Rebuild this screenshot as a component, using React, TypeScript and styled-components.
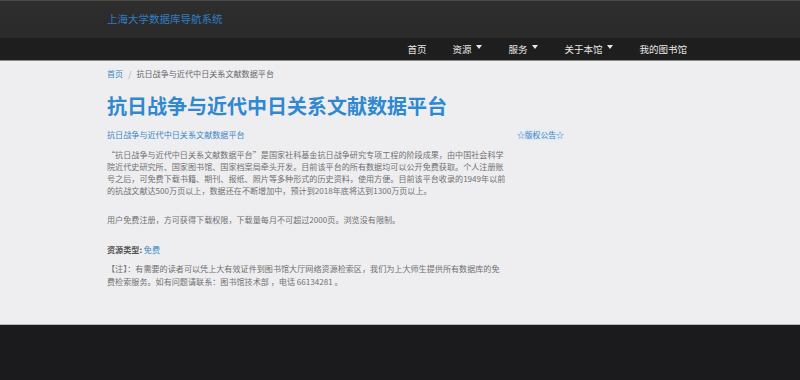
import styled, { createGlobalStyle } from "styled-components"

const GlobalStyle = createGlobalStyle`
    html, body {
        margin: 0;
        padding: 0;
        background: #1b1a1c;
        font-family: "Noto Sans CJK SC", "Noto Sans", sans-serif;
    }
`

const navItems = [
    { label: "首页", caret: false },
    { label: "资源", caret: true },
    { label: "服务", caret: true },
    { label: "关于本馆", caret: true },
    { label: "我的图书馆", caret: false },
]

// lines broken as in the original page
const introLines = [
    "“抗日战争与近代中日关系文献数据平台”是国家社科基金抗日战争研究专项工程的阶段成果，由中国社会科学",
    "院近代史研究所、国家图书馆、国家档案局牵头开发。目前该平台的所有数据均可以公开免费获取。个人注册账",
    "号之后，可免费下载书籍、期刊、报纸、照片等多种形式的历史资料，使用方便。目前该平台收录的1949年以前",
    "的抗战文献达500万页以上，数据还在不断增加中，预计到2018年底将达到1300万页以上。",
]

const noteLines = [
    "【注】：有需要的读者可以凭上大有效证件到图书馆大厅网络资源检索区，我们为上大师生提供所有数据库的免",
    "费检索服务。如有问题请联系：图书馆技术部 ，电话 66134281 。",
]

export default function App() {
    return (
        <>
            <GlobalStyle />
            <TopBar>
                <Container>
                    <SiteTitle>上海大学数据库导航系统</SiteTitle>
                </Container>
            </TopBar>
            <NavBar>
                <NavInner>
                    {navItems.map((item) => (
                        <NavItem key={item.label}>
                            {item.label}
                            {item.caret ? <Caret /> : null}
                        </NavItem>
                    ))}
                </NavInner>
            </NavBar>
            <Content>
                <Container>
                    <Breadcrumb>
                        <Crumb>首页</Crumb>
                        <Slash>/</Slash>
                        抗日战争与近代中日关系文献数据平台
                    </Breadcrumb>
                    <Heading>抗日战争与近代中日关系文献数据平台</Heading>
                    <Row>
                        <Main>
                            <SubTitle>抗日战争与近代中日关系文献数据平台</SubTitle>
                            <Para>
                                {introLines.map((line) => (
                                    <Line key={line}>{line}</Line>
                                ))}
                            </Para>
                            <Para gap={17}>
                                用户免费注册，方可获得下载权限，下载量每月不可超过2000页。浏览没有限制。
                            </Para>
                            <TypeLine>
                                <TypeLabel>资源类型:</TypeLabel> <Crumb>免费</Crumb>
                            </TypeLine>
                            <Note>
                                {noteLines.map((line) => (
                                    <Line key={line}>{line}</Line>
                                ))}
                            </Note>
                        </Main>
                        <Side>☆版权公告☆</Side>
                    </Row>
                </Container>
            </Content>
            <Footer />
        </>
    )
}

const Container = styled.div`
    width: 586px;
    margin: 0 auto;
`

const TopBar = styled.header`
    height: 38px;
    background: linear-gradient(#2e2e2e, #2a2a2a);
    border-top: 1px solid #4a4a4a;
    box-sizing: border-box;
    display: flex;
    align-items: center;
`

const SiteTitle = styled.div`
    color: #2f7dc2;
    font-size: 10.5px;
    line-height: 14px;
    margin-top: -2px;
`

const NavBar = styled.nav`
    height: 22px;
    background: #1e1e1e;
    border-bottom: 1px solid #8a8a8a;
`

const NavInner = styled(Container)`
    display: flex;
    justify-content: flex-end;
    height: 100%;
    padding-right: 6px;
    box-sizing: border-box;
`

const NavItem = styled.div`
    display: flex;
    align-items: center;
    padding: 0 13px;
    color: #e8e8e8;
    font-size: 9.5px;
    &:last-child {
        padding-right: 0;
    }
`

const Caret = styled.span`
    width: 0;
    height: 0;
    margin-left: 5px;
    margin-top: -5px;
    border-left: 3px solid transparent;
    border-right: 3px solid transparent;
    border-top: 4px solid #e8e8e8;
`

const Content = styled.main`
    background: #eeeef0;
    height: 263px;
    padding-top: 6px;
    box-sizing: border-box;
`

const Breadcrumb = styled.div`
    font-size: 8.1px;
    line-height: 14px;
    color: #666;
`

const Crumb = styled.span`
    color: #3a87c8;
`

const Slash = styled.span`
    color: #aaa;
    margin: 0 5px;
`

const Heading = styled.h1`
    margin: 10px 0 0;
    font-size: 20px;
    line-height: 30px;
    font-weight: 700;
    color: #2f88d0;
`

const Row = styled.div`
    display: flex;
    gap: 10px;
    margin-top: 7px;
`

const Main = styled.div`
    width: 400px;
    white-space: nowrap;
`

const SubTitle = styled.div`
    color: #3a87c8;
    font-size: 8.1px;
    line-height: 14px;
`

const Para = styled.p<{ gap?: number }>`
    margin: ${(p) => p.gap ?? 7}px 0 0;
    color: #707070;
    font-size: 8.1px;
    line-height: 12px;
`

const Line = styled.span`
    display: block;
`

const TypeLine = styled.div`
    margin-top: 17px;
    font-size: 8.1px;
    line-height: 14px;
`

const TypeLabel = styled.span`
    color: #555;
    font-weight: 700;
`

const Note = styled.p`
    margin: 5px 0 0;
    color: #707070;
    font-size: 8.1px;
    line-height: 13px;
`

const Side = styled.div`
    color: #3a87c8;
    font-size: 7.8px;
    line-height: 14px;
    text-shadow: 0 0 4px #bcd8f2;
`

const Footer = styled.footer`
    height: 56px;
    background: #1b1a1c;
    border-top: 1px solid #b8b8b8;
`
